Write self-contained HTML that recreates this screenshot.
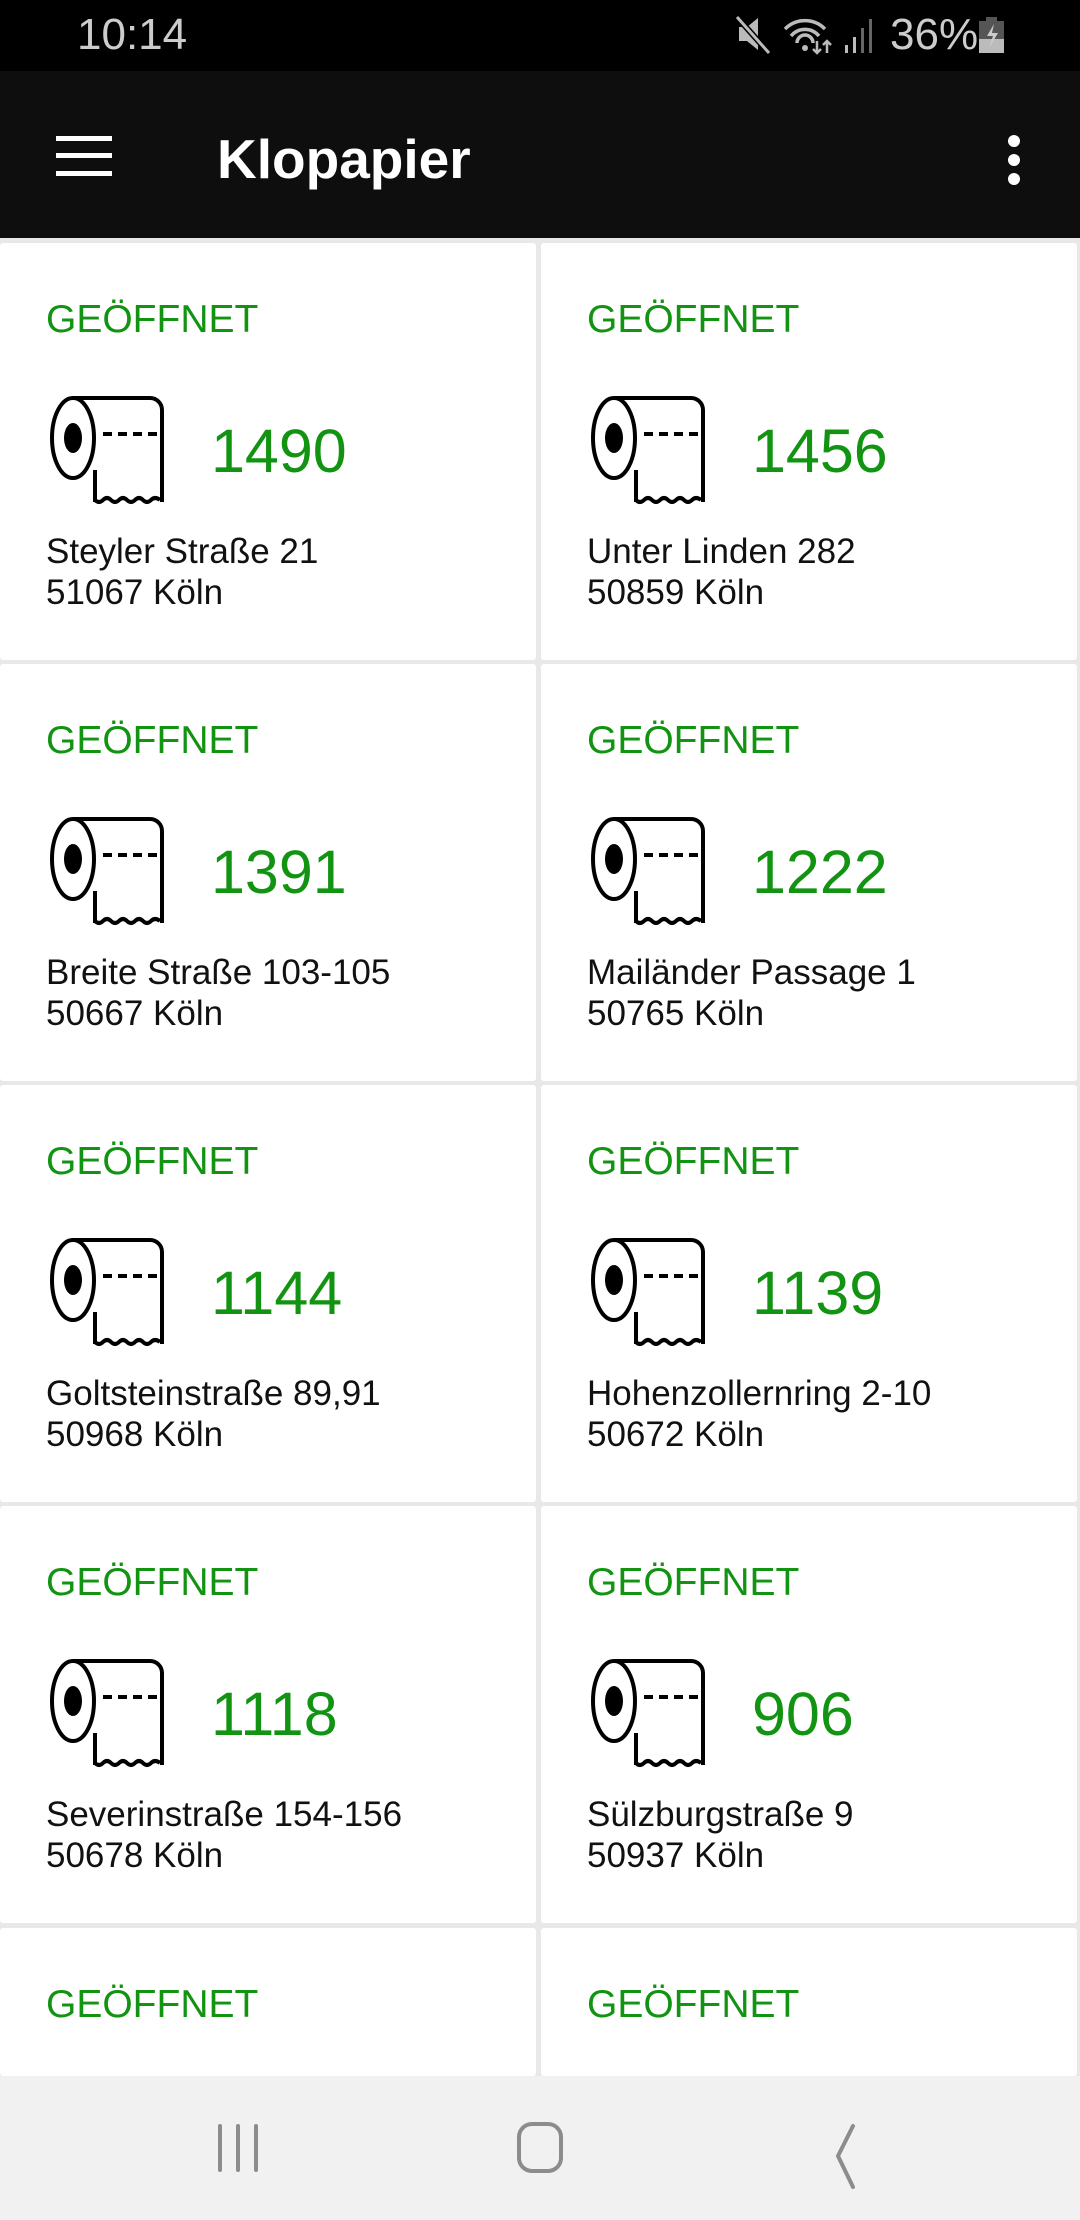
<!DOCTYPE html>
<html><head><meta charset="utf-8"><style>
*{margin:0;padding:0;box-sizing:border-box}
html,body{width:1080px;height:2220px;overflow:hidden}
body{background:#e8e8e8;position:relative;font-family:"Liberation Sans",Roboto,sans-serif}
.sb{position:absolute;left:0;top:0;width:1080px;height:71px;background:#000}
.tb{position:absolute;left:0;top:71px;width:1080px;height:167px;background:#0e0e0e}
.card{position:absolute;background:#fff;width:536px;height:417px;border-radius:3px}
.st{position:absolute;left:46px;top:55px;color:#129412;font-size:39px}
.num{position:absolute;left:211px;top:173px;color:#129412;font-size:61px}
.ic{position:absolute;left:50px;top:153px}
.ad{position:absolute;left:46px;top:288px;font-size:35px;line-height:41px;color:#111}
.nav{position:absolute;left:0;top:2076px;width:1080px;height:144px;background:#f1f1f1}
</style></head><body>
<div class="sb">
<div style="position:absolute;left:77px;top:10px;color:#ccc;font-size:44px">10:14</div>
<svg style="position:absolute;left:735px;top:15px" width="272" height="42" viewBox="0 0 272 42">
<path d="M4 12h8l11-9v32l-11-9H4z" fill="#bbb"/><path d="M2 2l32 36" stroke="#000" stroke-width="6"/><path d="M2 2l32 36" stroke="#bbb" stroke-width="3"/>
<path d="M50 14a28 28 0 0 1 40 0M56 21a18 18 0 0 1 28 0M62 28a8 8 0 0 1 16 0" stroke="#bbb" stroke-width="3.5" fill="none"/><circle cx="70" cy="33" r="3" fill="#bbb"/>
<path d="M82 26v12M78 34l4 4 4-4M92 38V26M88 30l4-4 4 4" stroke="#bbb" stroke-width="2.5" fill="none"/>
<rect x="110" y="30" width="3" height="8" fill="#bbb"/><rect x="118" y="22" width="3" height="16" fill="#bbb"/><rect x="126" y="13" width="3" height="25" fill="#666"/><rect x="134" y="4" width="3" height="34" fill="#666"/>
<rect x="244" y="6" width="25" height="32" fill="#555"/><rect x="244" y="24" width="25" height="14" fill="#bbb"/><rect x="251" y="2" width="11" height="4" fill="#555"/>
<path d="M259 9l-7 12h6l-4 12 9-15h-6z" fill="#ccc"/>
</svg>
<div style="position:absolute;left:890px;top:10px;color:#ccc;font-size:44px">36%</div>
</div>
<div class="tb">
<div style="position:absolute;left:56px;top:65px;width:56px;height:5px;background:#fff;box-shadow:0 17px 0 #fff,0 35px 0 #fff"></div>
<div style="position:absolute;left:217px;top:56px;color:#fff;font-size:55px;font-weight:bold">Klopapier</div>
<div style="position:absolute;left:1008px;top:64px;width:12px;height:12px;border-radius:6px;background:#fff;box-shadow:0 19px 0 #fff,0 38px 0 #fff"></div>
</div>
<svg width="0" height="0" style="position:absolute"><defs><g id="roll" fill="none" stroke="#000" stroke-width="4" stroke-linejoin="round">
<ellipse cx="23" cy="42" rx="21" ry="40"/>
<ellipse cx="23" cy="42" rx="9" ry="15" fill="#000" stroke="none"/>
<path d="M23 2H100a12 12 0 0 1 12 12V106"/>
<path d="M45 74V106"/>
<path d="M45 104q4 4 8 0t8 0t8 0t8 0t8 0t8 0t8 0t9 0"/>
<path d="M53 38h55" stroke-dasharray="9 6"/>
</g></defs></svg>

<div class="card" style="left:0;top:243px"><div class="st">GEÖFFNET</div><svg class="ic" width="116" height="110"><use href="#roll"/></svg><div class="num">1490</div><div class="ad">Steyler Straße 21<br>51067 Köln</div></div>
<div class="card" style="left:541px;top:243px"><div class="st">GEÖFFNET</div><svg class="ic" width="116" height="110"><use href="#roll"/></svg><div class="num">1456</div><div class="ad">Unter Linden 282<br>50859 Köln</div></div>

<div class="card" style="left:0;top:664px"><div class="st">GEÖFFNET</div><svg class="ic" width="116" height="110"><use href="#roll"/></svg><div class="num">1391</div><div class="ad">Breite Straße 103-105<br>50667 Köln</div></div>
<div class="card" style="left:541px;top:664px"><div class="st">GEÖFFNET</div><svg class="ic" width="116" height="110"><use href="#roll"/></svg><div class="num">1222</div><div class="ad">Mailänder Passage 1<br>50765 Köln</div></div>

<div class="card" style="left:0;top:1085px"><div class="st">GEÖFFNET</div><svg class="ic" width="116" height="110"><use href="#roll"/></svg><div class="num">1144</div><div class="ad">Goltsteinstraße 89,91<br>50968 Köln</div></div>
<div class="card" style="left:541px;top:1085px"><div class="st">GEÖFFNET</div><svg class="ic" width="116" height="110"><use href="#roll"/></svg><div class="num">1139</div><div class="ad">Hohenzollernring 2-10<br>50672 Köln</div></div>

<div class="card" style="left:0;top:1506px"><div class="st">GEÖFFNET</div><svg class="ic" width="116" height="110"><use href="#roll"/></svg><div class="num">1118</div><div class="ad">Severinstraße 154-156<br>50678 Köln</div></div>
<div class="card" style="left:541px;top:1506px"><div class="st">GEÖFFNET</div><svg class="ic" width="116" height="110"><use href="#roll"/></svg><div class="num">906</div><div class="ad">Sülzburgstraße 9<br>50937 Köln</div></div>

<div class="card" style="left:0;top:1928px;height:148px"><div class="st">GEÖFFNET</div></div>
<div class="card" style="left:541px;top:1928px;height:148px"><div class="st">GEÖFFNET</div></div>

<div class="nav">
<svg width="1080" height="144">
<g stroke="#8c8c8c" stroke-width="4" stroke-linecap="round" fill="none">
<path d="M220 50v44M238 50v44M256 50v44"/>
<rect x="519" y="48" width="42" height="47" rx="13"/>
<path d="M853 50l-15 30 15 31"/>
</g></svg>
</div>
</body></html>
